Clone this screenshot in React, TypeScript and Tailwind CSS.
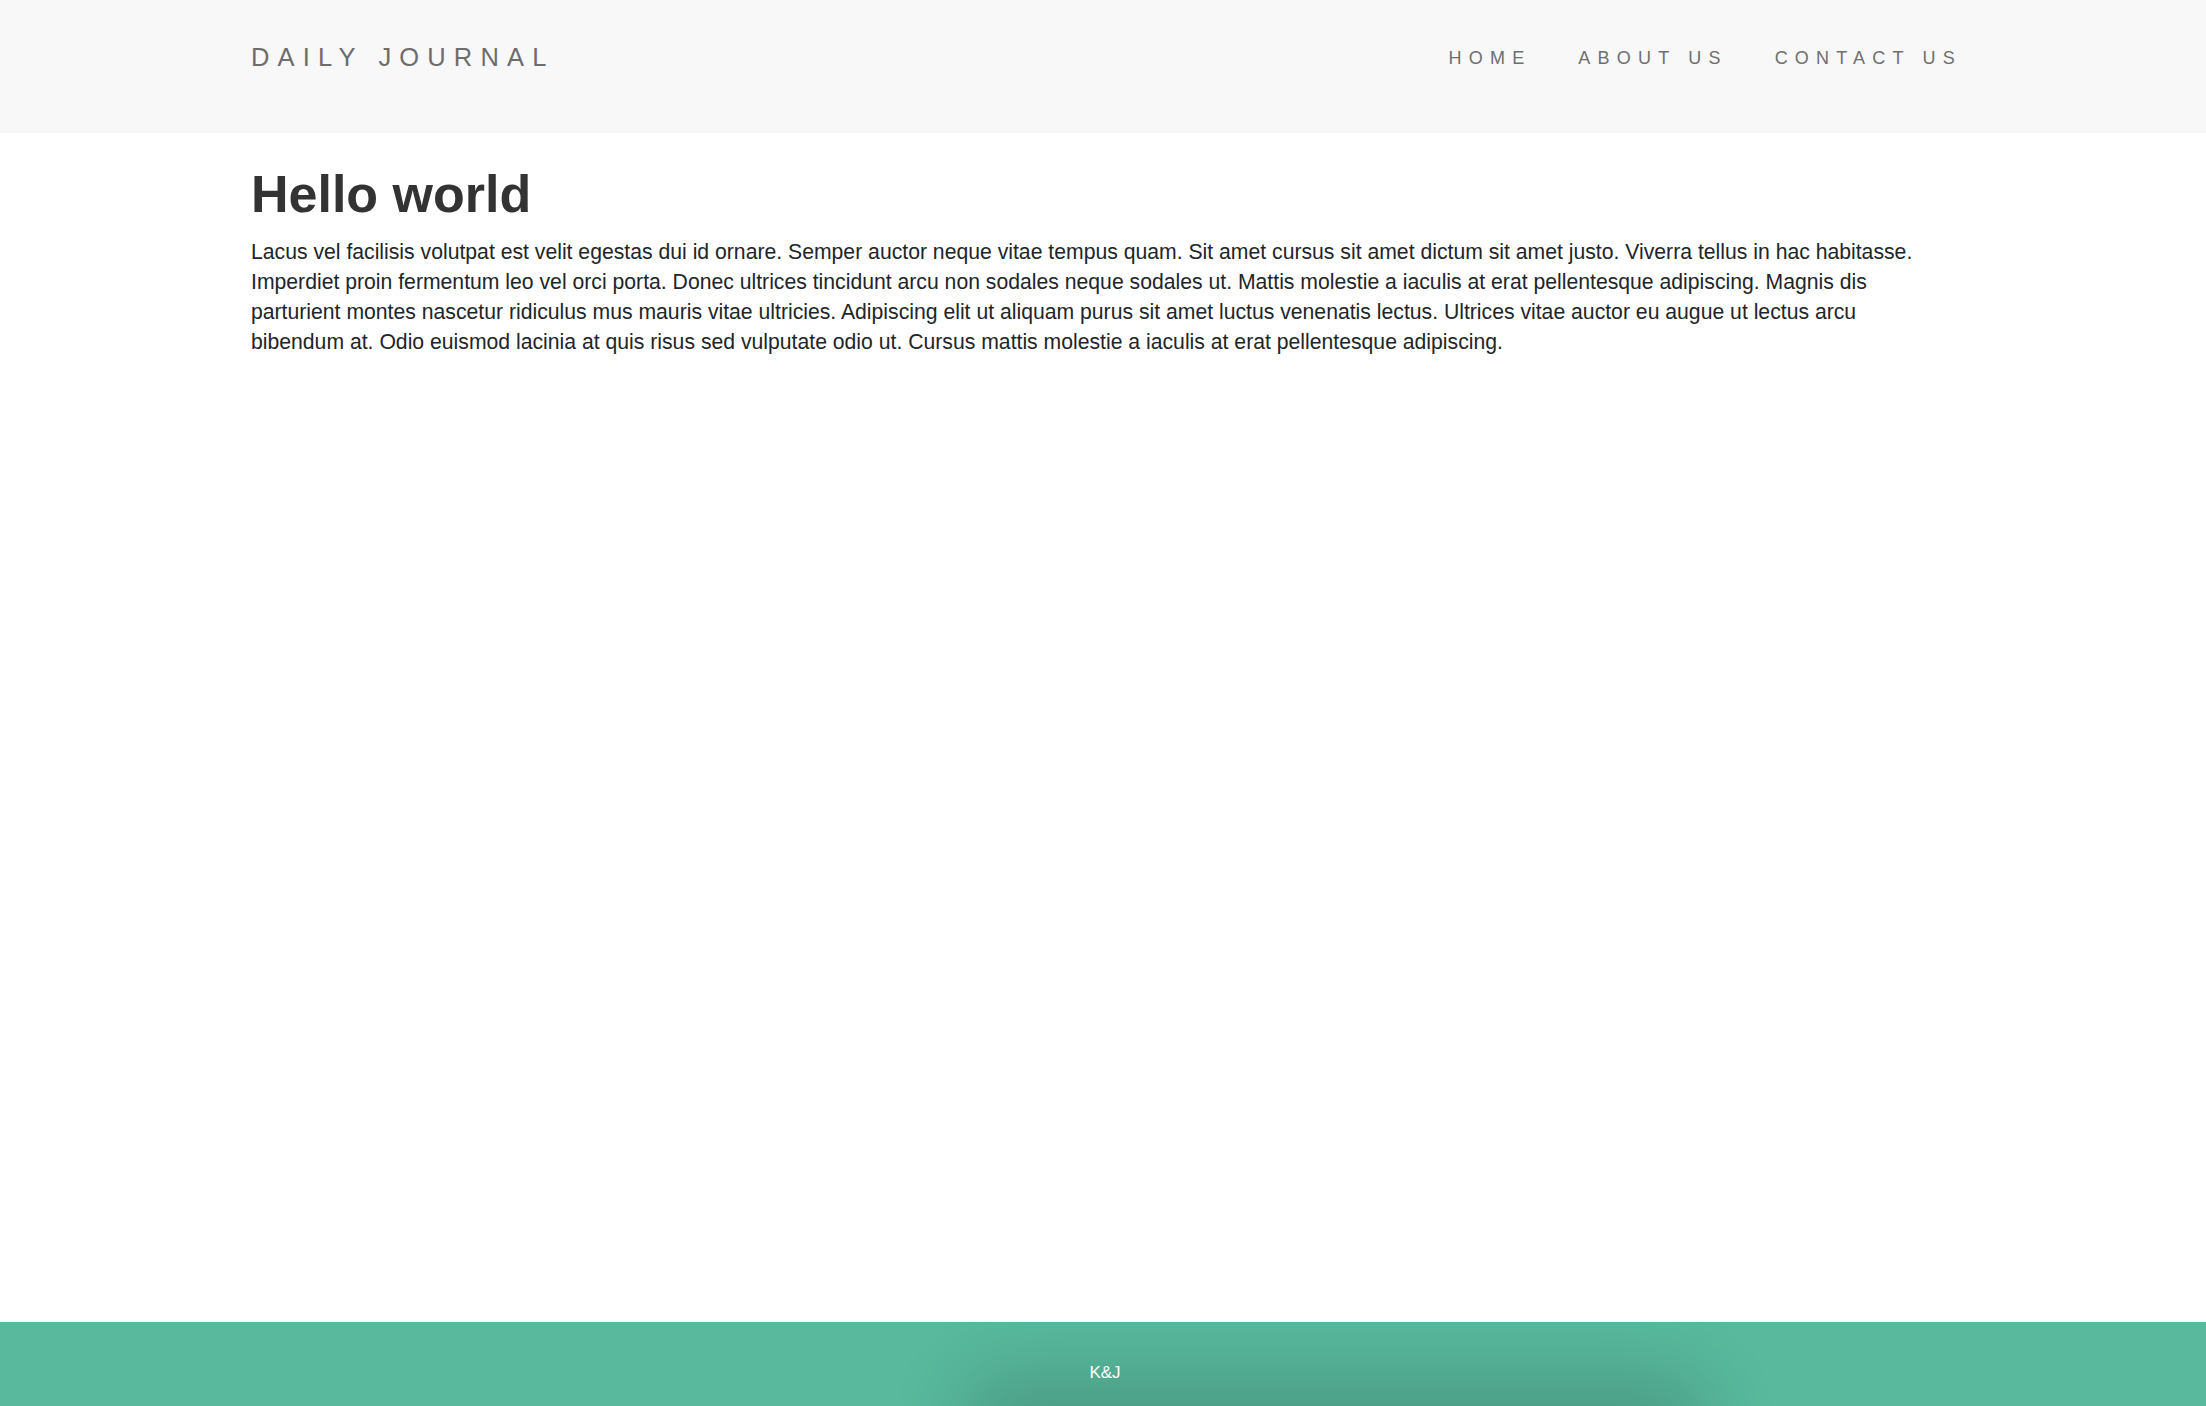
const paragraph = [
  'Lacus vel facilisis volutpat est velit egestas dui id ornare. Semper auctor neque vitae tempus quam. Sit amet cursus sit amet dictum sit amet justo. Viverra tellus in hac habitasse.',
  'Imperdiet proin fermentum leo vel orci porta. Donec ultrices tincidunt arcu non sodales neque sodales ut. Mattis molestie a iaculis at erat pellentesque adipiscing. Magnis dis',
  'parturient montes nascetur ridiculus mus mauris vitae ultricies. Adipiscing elit ut aliquam purus sit amet luctus venenatis lectus. Ultrices vitae auctor eu augue ut lectus arcu',
  'bibendum at. Odio euismod lacinia at quis risus sed vulputate odio ut. Cursus mattis molestie a iaculis at erat pellentesque adipiscing.',
];

const links = ['HOME', 'ABOUT US', 'CONTACT US'];

export default function App() {
  return (
    <div className="flex min-h-screen flex-col bg-white font-['Liberation_Sans',Arial,sans-serif]">
      {/* Navbar */}
      <header className="h-[133px] bg-[#f8f8f8] pb-[17px]">
        <div className="mx-auto flex h-full w-[1704px] items-center justify-between">
          <a className="text-[25.5px] leading-none tracking-[0.32em] text-[#6d6d6d]">DAILY JOURNAL</a>
          <nav className="-mr-[7px] flex items-center gap-[47px]">
            {links.map((l) => (
              <a key={l} className="text-[18px] leading-none tracking-[7.2px] text-[#6f6f6f]">
                {l}
              </a>
            ))}
          </nav>
        </div>
      </header>

      {/* Content */}
      <main className="flex-1">
        <div className="mx-auto w-[1704px] pt-[30px]">
          <h1 className="mb-[12px] text-[52px] font-bold leading-[1.2] text-[#333333]">Hello world</h1>
          <p className="text-[21.2px] leading-[30px] text-[#212529]">
            {paragraph.map((line, i) => (
              <span key={i}>
                {line}
                {i < paragraph.length - 1 && <br />}
              </span>
            ))}
          </p>
        </div>
      </main>

      {/* Footer */}
      <footer className="relative h-[84px] overflow-hidden bg-[#58b99d]">
        <div className="absolute bottom-[-75px] left-[960px] h-[110px] w-[750px] rounded-full bg-black/15 blur-[35px]" />
        <div className="relative flex h-full items-center justify-center pl-[4px] pt-[16px]">
          <span className="text-[17px] leading-none text-white">K&amp;J</span>
        </div>
      </footer>
    </div>
  );
}
